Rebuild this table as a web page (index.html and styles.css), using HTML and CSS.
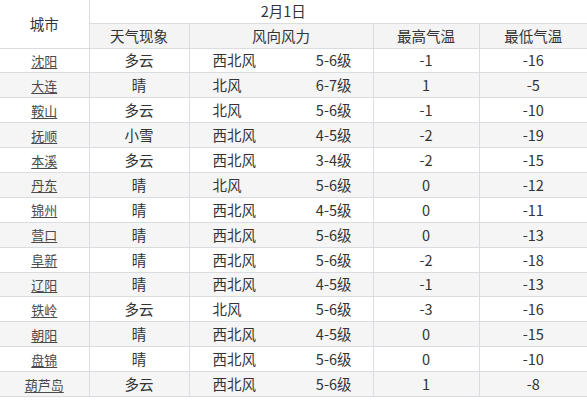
FILE: index.html
```html
<!DOCTYPE html>
<html lang="zh-CN">
<head>
<meta charset="utf-8">
<title>2月1日 天气</title>
<link rel="stylesheet" href="styles.css">
</head>
<body>
<table class="wx">
  <colgroup>
    <col class="c-city"><col class="c-sky"><col class="c-wind"><col class="c-hi"><col class="c-lo">
  </colgroup>
  <thead>
    <tr class="h1">
      <th rowspan="2" class="city-h">城市</th>
      <th colspan="5" class="date">2月1日</th>
    </tr>
    <tr class="h2">
      <th>天气现象</th><th>风向风力</th><th>最高气温</th><th>最低气温</th>
    </tr>
  </thead>
  <tbody>
    <tr><td class="city"><a>沈阳</a></td><td>多云</td><td class="wind"><div class="wind-in"><span>西北风</span><span>5-6级</span></div></td><td>-1</td><td>-16</td></tr>
    <tr><td class="city"><a>大连</a></td><td>晴</td><td class="wind"><div class="wind-in"><span>北风</span><span>6-7级</span></div></td><td>1</td><td>-5</td></tr>
    <tr><td class="city"><a>鞍山</a></td><td>多云</td><td class="wind"><div class="wind-in"><span>北风</span><span>5-6级</span></div></td><td>-1</td><td>-10</td></tr>
    <tr><td class="city"><a>抚顺</a></td><td>小雪</td><td class="wind"><div class="wind-in"><span>西北风</span><span>4-5级</span></div></td><td>-2</td><td>-19</td></tr>
    <tr><td class="city"><a>本溪</a></td><td>多云</td><td class="wind"><div class="wind-in"><span>西北风</span><span>3-4级</span></div></td><td>-2</td><td>-15</td></tr>
    <tr><td class="city"><a>丹东</a></td><td>晴</td><td class="wind"><div class="wind-in"><span>北风</span><span>5-6级</span></div></td><td>0</td><td>-12</td></tr>
    <tr><td class="city"><a>锦州</a></td><td>晴</td><td class="wind"><div class="wind-in"><span>西北风</span><span>4-5级</span></div></td><td>0</td><td>-11</td></tr>
    <tr><td class="city"><a>营口</a></td><td>晴</td><td class="wind"><div class="wind-in"><span>西北风</span><span>5-6级</span></div></td><td>0</td><td>-13</td></tr>
    <tr><td class="city"><a>阜新</a></td><td>晴</td><td class="wind"><div class="wind-in"><span>西北风</span><span>5-6级</span></div></td><td>-2</td><td>-18</td></tr>
    <tr><td class="city"><a>辽阳</a></td><td>晴</td><td class="wind"><div class="wind-in"><span>西北风</span><span>4-5级</span></div></td><td>-1</td><td>-13</td></tr>
    <tr><td class="city"><a>铁岭</a></td><td>多云</td><td class="wind"><div class="wind-in"><span>北风</span><span>5-6级</span></div></td><td>-3</td><td>-16</td></tr>
    <tr><td class="city"><a>朝阳</a></td><td>晴</td><td class="wind"><div class="wind-in"><span>西北风</span><span>4-5级</span></div></td><td>0</td><td>-15</td></tr>
    <tr><td class="city"><a>盘锦</a></td><td>晴</td><td class="wind"><div class="wind-in"><span>西北风</span><span>5-6级</span></div></td><td>0</td><td>-10</td></tr>
    <tr><td class="city"><a>葫芦岛</a></td><td>多云</td><td class="wind"><div class="wind-in"><span>西北风</span><span>5-6级</span></div></td><td>1</td><td>-8</td></tr>
  </tbody>
</table>
</body>
</html>
```

FILE: styles.css
```css
html, body {
  margin: 0;
  padding: 0;
  background: #ffffff;
}

body {
  font-family: "Noto Sans CJK SC", "Noto Sans", sans-serif;
  color: #333333;
  font-size: 14.5px;
}

.wx {
  border-collapse: collapse;
  table-layout: fixed;
  width: 587px;
}

.c-city { width: 89px; }
.c-sky { width: 100px; }
.c-wind { width: 184px; }
.c-hi { width: 106px; }
.c-lo { width: 108px; }

.wx th,
.wx td {
  padding: 0;
  text-align: center;
  font-weight: normal;
  line-height: 20px;
  border: 1px solid #d9dde1;
  white-space: nowrap;
}

.wx tr > :first-child { border-left: none; }
.wx tr > :last-child { border-right: none; }
.wx thead tr:first-child > * { border-top: none; }

.h1 { height: 23px; }
.h2 { height: 25px; }
.wx tbody tr { height: 24.9px; }

.city-h {
  background: #ffffff;
  vertical-align: middle;
}

.wx th.date {
  padding-right: 110px;
  background: #ffffff;
}

.h2 th {
  background: #f4f4f5;
}

.wx tbody tr:nth-child(even) td {
  background: #f5f5f6;
}

.city a {
  font-size: 13px;
  color: #4a4a4a;
  text-decoration: underline;
  text-underline-offset: 2px;
}

.wx td.wind {
  padding: 0 21px 0 23px;
  text-align: left;
}

.wind-in {
  display: flex;
  justify-content: space-between;
}
```
